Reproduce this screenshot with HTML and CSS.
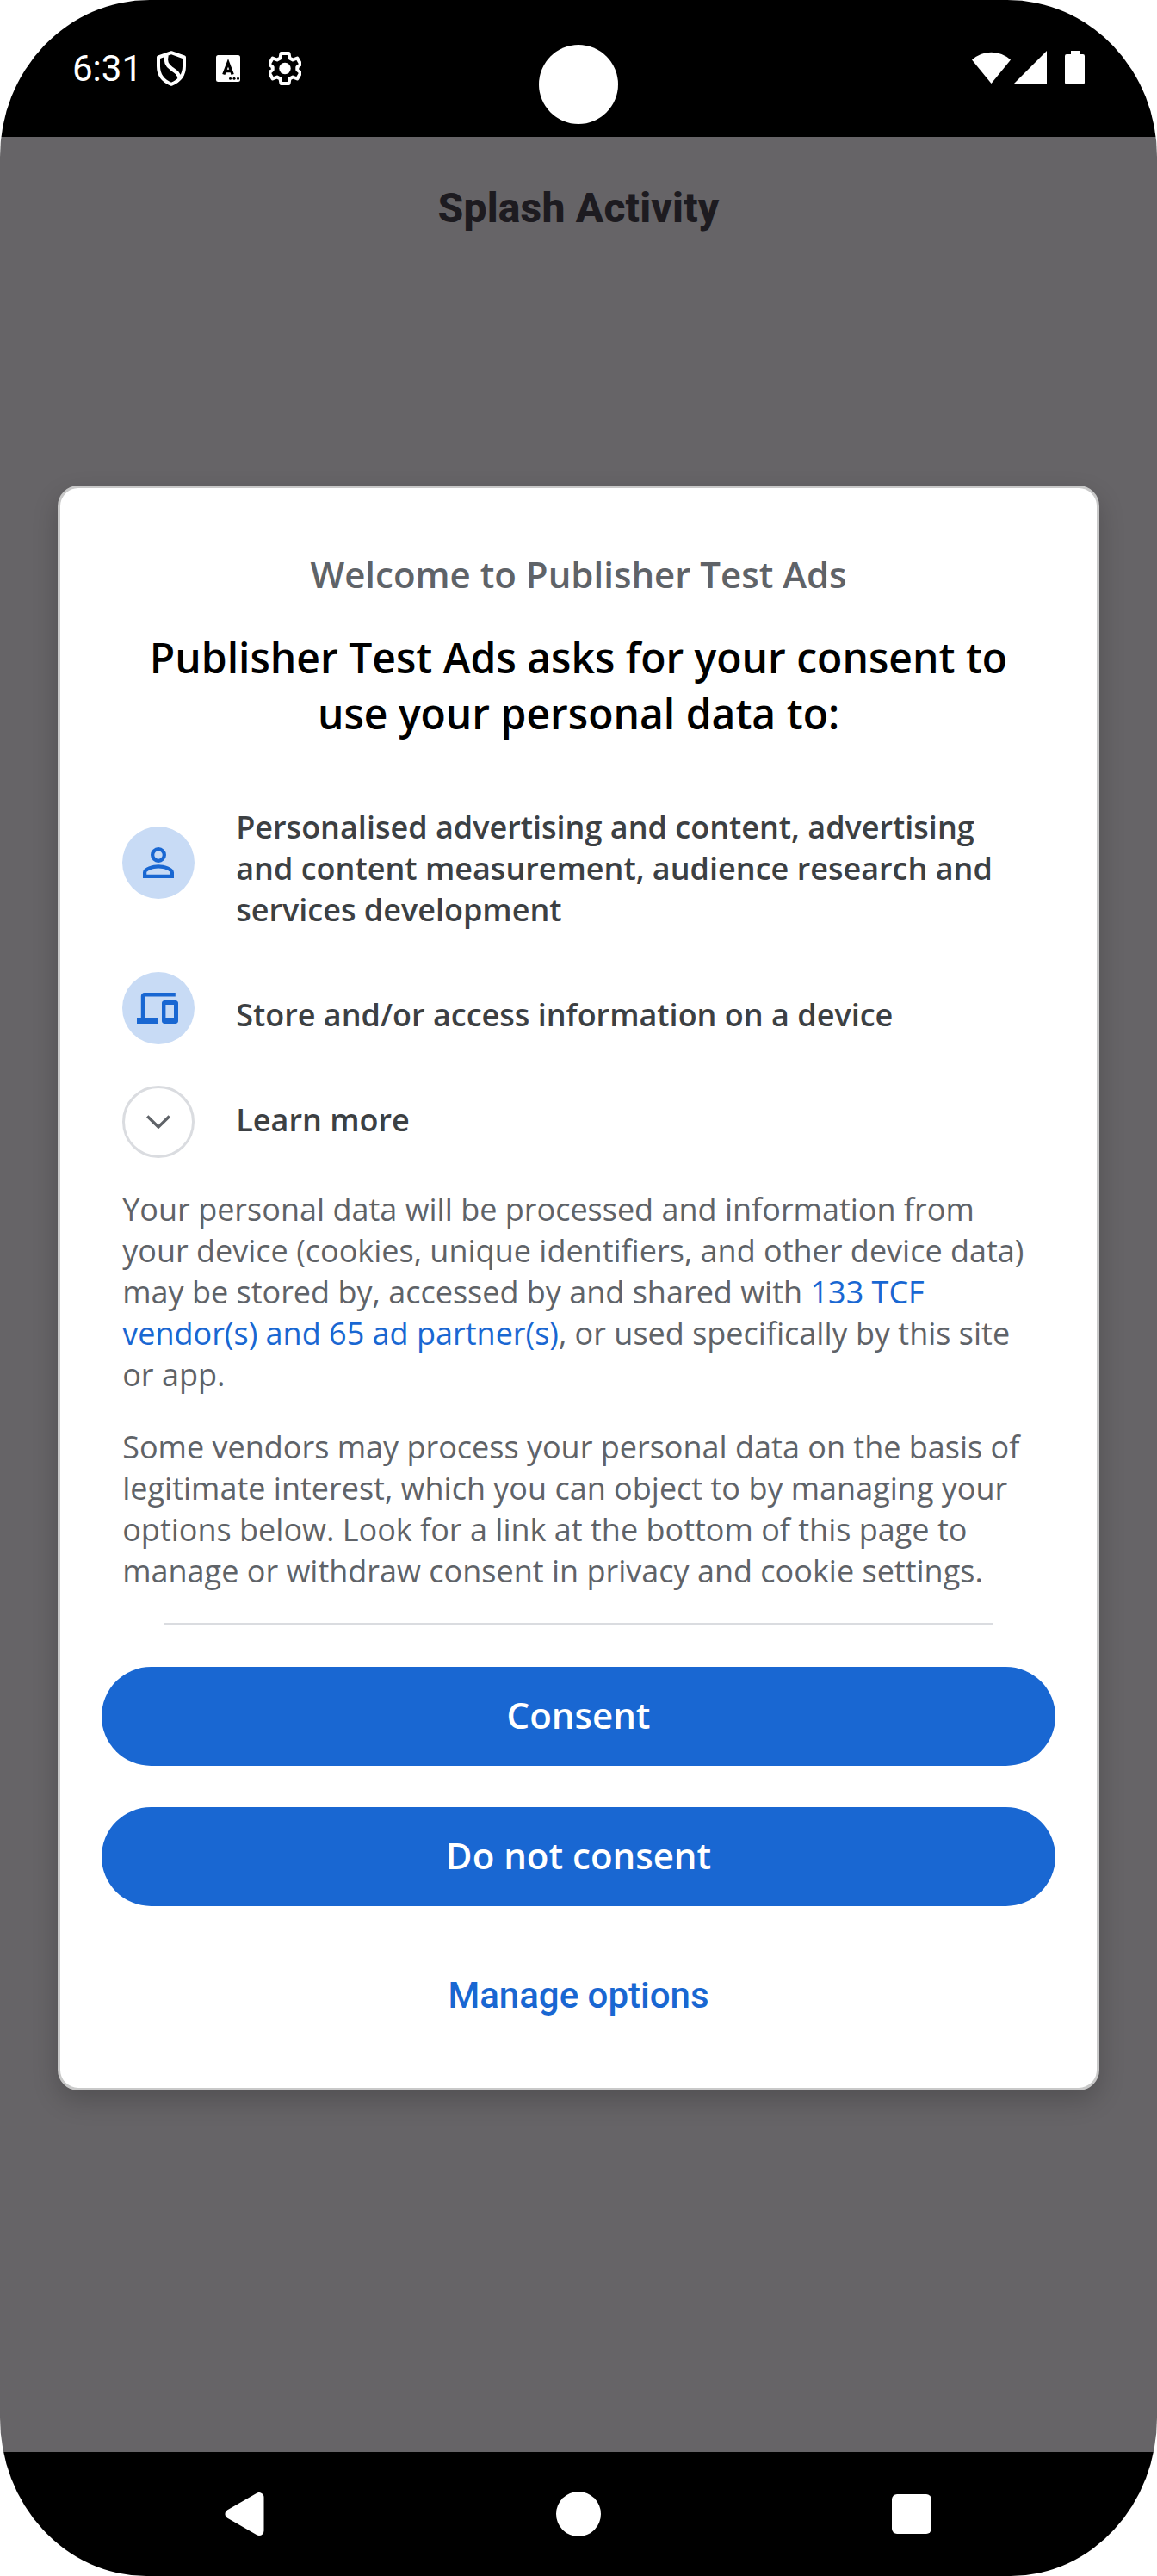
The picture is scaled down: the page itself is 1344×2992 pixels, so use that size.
FILE: index.html
```html
<!DOCTYPE html>
<html lang="en">
<head>
<meta charset="utf-8">
<title>Splash Activity</title>
<link rel="stylesheet" href="styles.css">
</head>
<body>
<div class="phone">
  <header class="status">
    <span class="clock">6:31</span>
    <svg class="shield" width="34" height="41" viewBox="0 0 34 41" fill="none" stroke="#fff" stroke-width="4" stroke-linejoin="round"><path d="M17 2.200 32 7.500V18c0 9.500-5.500 17-15 20.800C7.500 35 2 27.500 2 18V7.500z"/><path d="M11.500 5c-2 8 .5 12 5.500 15.500s9 6 9.500 11.500" stroke-width="4.500"/></svg>
    <svg class="letter" width="28" height="31" viewBox="0 0 28 31"><rect width="28" height="31" rx="2.500" fill="#fff"/><path d="M8.800 22.500 14 9l5.200 13.500M10.500 18.500h7" fill="none" stroke="#000" stroke-width="3.400"/><g fill="#000"><circle cx="16.500" cy="27.300" r="1.500"/><circle cx="21" cy="27.300" r="1.500"/><circle cx="25.500" cy="27.300" r="1.500"/></g></svg>
    <svg class="gear" width="38" height="39" viewBox="-19 -19.500 38 39"><path d="M-4.500-17.500h9l1 5.500 3.600 2 5.200-2 4 7-4 3.500v3l4 3.500-4 7-5.200-2-3.600 2-1 5.500h-9l-1-5.500-3.600-2-5.200 2-4-7 4-3.500v-3l-4-3.500 4-7 5.200 2 3.600-2z" fill="none" stroke="#fff" stroke-width="4" stroke-linejoin="round"/><circle r="6.700" fill="#fff"/></svg>
    <span class="spacer"></span>
    <svg class="wifi" width="45" height="38" viewBox="0 0 45 38"><path d="M0 10.500a33 33 0 0 1 45 0L22.500 38z" fill="#fff"/></svg>
    <svg class="signal" width="38" height="38" viewBox="0 0 38 38"><path d="M38 0v38H0z" fill="#fff"/></svg>
    <svg class="battery" width="23" height="39" viewBox="0 0 23 39"><path d="M7 0h10v4h4q2 0 2 2v31q0 2-2 2H2q-2 0-2-2V6q0-2 2-2h5z" fill="#fff"/></svg>
    <span class="camera"></span>
  </header>
  <main class="screen">
    <h1 class="title">Splash Activity</h1>
    <section class="card">
      <p class="welcome">Welcome to Publisher Test Ads</p>
      <h2 class="heading">Publisher Test Ads asks for your consent to<br>use your personal data to:</h2>
      <ul class="purposes">
        <li class="purpose purpose-first">
          <span class="badge"><svg width="54" height="54" viewBox="0 0 24 24" fill="#1967d2"><path d="M12 5.900a2.100 2.100 0 1 1 0 4.200 2.100 2.100 0 0 1 0-4.200m0 9c2.970 0 6.100 1.460 6.100 2.100v1.100H5.900V17c0-.64 3.130-2.100 6.100-2.100M12 4a4 4 0 1 0 0 8 4 4 0 0 0 0-8zm0 9c-2.670 0-8 1.340-8 4v3h16v-3c0-2.660-5.330-4-8-4z"/></svg></span>
          <span class="label">Personalised advertising and content, advertising<br>and content measurement, audience research and<br>services development</span>
        </li>
        <li class="purpose purpose-device">
          <span class="badge"><svg width="48" height="48" viewBox="0 0 24 24" fill="#1967d2"><path d="M2.400 5c0-1.100.9-2 2-2h18v2.200H4.800v12.300h7.600V21H0v-3.500h2.400z"/><path fill-rule="evenodd" d="M16 7.500h6.500c.8 0 1.500.7 1.500 1.500v10.500c0 .8-.7 1.500-1.500 1.500H16c-.8 0-1.500-.7-1.500-1.500V9c0-.8.700-1.500 1.500-1.500zM16.700 10v7.500h4.800V10z"/></svg></span>
          <span class="label">Store and/or access information on a device</span>
        </li>
        <li class="purpose purpose-more">
          <span class="badge badge-outline"><svg width="28" height="16" viewBox="0 0 28 16" fill="none" stroke="#5f6368" stroke-width="3.400"><path d="M1.200 1.500 14 14 26.800 1.500"/></svg></span>
          <span class="label">Learn more</span>
        </li>
      </ul>
      <p class="copy">Your personal data will be processed and information from<br>your device (cookies, unique identifiers, and other device data)<br>may be stored by, accessed by and shared with <a class="link">133 TCF<br>vendor(s) and 65 ad partner(s)</a>, or used specifically by this site<br>or app.</p>
      <p class="copy">Some vendors may process your personal data on the basis of<br>legitimate interest, which you can object to by managing your<br>options below. Look for a link at the bottom of this page to<br>manage or withdraw consent in privacy and cookie settings.</p>
      <hr class="divider">
      <div class="actions">
        <button class="button">Consent</button>
        <button class="button">Do not consent</button>
        <button class="button button-text">Manage options</button>
      </div>
    </section>
  </main>
  <nav class="nav">
    <svg width="46" height="50" viewBox="0 0 46 50"><path d="M6 25 40 5.500v39z" fill="#fff" stroke="#fff" stroke-width="11" stroke-linejoin="round"/></svg>
    <svg width="52" height="52" viewBox="0 0 52 52"><circle cx="26" cy="26" r="26" fill="#fff"/></svg>
    <svg width="46" height="46" viewBox="0 0 46 46"><rect width="46" height="46" rx="6" fill="#fff"/></svg>
  </nav>
</div>
</body>
</html>
```
FILE: styles.css
```css
* { box-sizing: border-box; }
body { margin: 0; background: #fff; }
h1, h2, p, ul { margin: 0; padding: 0; }
svg { display: block; flex: none; }

.phone {
  width: 1344px;
  height: 2992px;
  display: flex;
  flex-direction: column;
  overflow: hidden;
  border-radius: 174px 174px 170px 170px / 182px 182px 184px 184px;
}

.status {
  position: relative;
  height: 159px;
  background: #000;
  display: flex;
  align-items: flex-start;
  padding: 59px 84px 0 84px;
}
.clock {
  width: 98px;
  margin-top: -4px;
  font: 400 42px/49px Roboto, sans-serif;
  color: #fff;
}
.letter { margin: 5px 0 0 35px; }
.gear { margin: 1px 0 0 33px; }
.spacer { flex: 1; }
.signal { margin: 0 21px 0 4px; }
.camera {
  position: absolute;
  left: 626px;
  top: 52px;
  width: 92px;
  height: 92px;
  border-radius: 50%;
  background: #fff;
}

.screen {
  height: 2689px;
  background: #666467;
  display: flex;
  flex-direction: column;
  align-items: center;
}
.title {
  margin-top: 55px;
  font: 800 48px/56px Roboto, sans-serif;
  letter-spacing: .2px;
  color: #1d1b20;
}

.card {
  width: 1209.6px;
  height: 1863.5px;
  margin-top: 294px;
  padding: 71px 72px 0;
  background: #fff;
  border: 3px solid #c9c9c9;
  border-radius: 24px;
  box-shadow: 0 12px 30px rgba(0, 0, 0, .2);
  font-family: "Open Sans", sans-serif;
}
.welcome {
  font-size: 42px;
  line-height: 57px;
  font-weight: 600;
  color: #5f6368;
  text-align: center;
}
.heading {
  margin: 36px -20px 0;
  font-size: 48px;
  line-height: 65px;
  font-weight: 600;
  color: #000;
  text-align: center;
}
.purposes { list-style: none; margin-top: 75px; }
.purpose { display: flex; gap: 48px; height: 84px; }
.purpose-first { height: 144px; }
.purpose-device { margin-top: 49px; }
.purpose-more { margin-top: 48px; }
.badge {
  flex: none;
  width: 84px;
  height: 84px;
  border-radius: 50%;
  background: #c8dbf5;
  display: flex;
  align-items: center;
  justify-content: center;
}
.badge-outline { background: #fff; border: 3px solid #dadce0; }
.label {
  margin-top: 1px;
  font-size: 36px;
  line-height: 48px;
  font-weight: 600;
  color: #3c4043;
  white-space: nowrap;
}
.purpose-first .badge { margin-top: 24px; }
.purpose-device .badge { padding-right: 2px; }
.purpose-device .label { margin-top: 26px; }
.purpose-more .label { margin-top: 16px; }
.copy {
  margin-top: 36px;
  font-size: 36px;
  line-height: 48px;
  color: #5f6368;
  white-space: nowrap;
}
.link { color: #1967d2; }
.divider {
  height: 3px;
  margin: 36px 48px 0;
  border: 0;
  background: #dadce0;
}
.actions {
  margin: 48px -24px 0;
  display: flex;
  flex-direction: column;
  gap: 48px;
}
.button {
  height: 115px;
  padding: 0 0 5px;
  border: 0;
  border-radius: 58px;
  background: #1967d2;
  color: #fff;
  font: 600 42px/57px "Open Sans", sans-serif;
}
.button-text {
  background: none;
  color: #1967d2;
  font-family: Roboto, sans-serif;
  font-weight: 500;
}

.nav {
  height: 144px;
  background: #000;
  display: flex;
  justify-content: space-between;
  align-items: center;
  padding: 0 262px 0 261px;
}
```
